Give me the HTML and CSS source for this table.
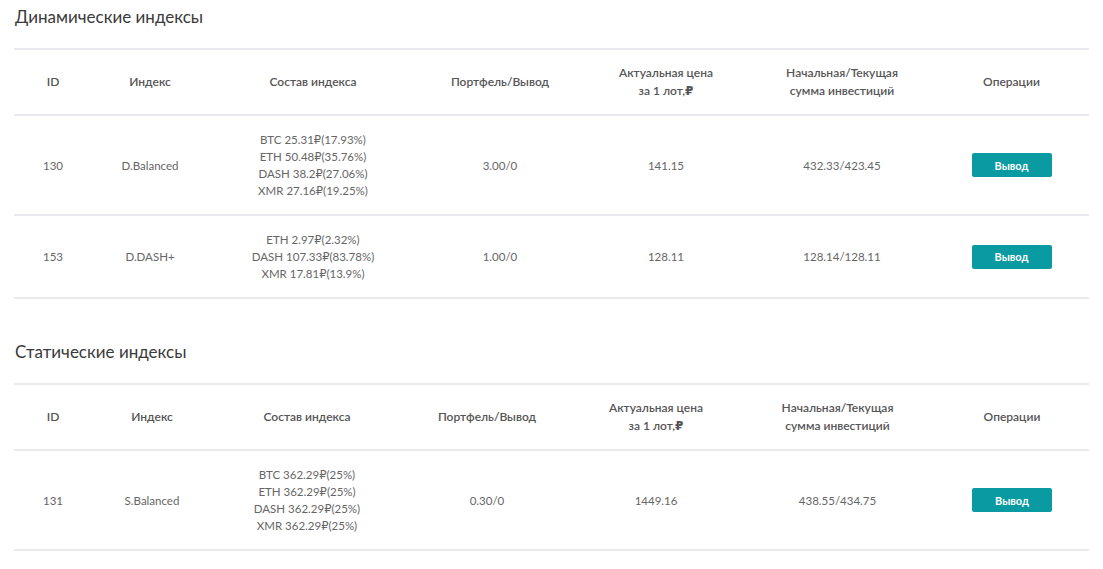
FILE: index.html
```html
<!DOCTYPE html>
<html lang="ru">
<head>
<meta charset="utf-8">
<link rel="stylesheet" href="styles.css">
</head>
<body>
<div class="page">
  <section class="section">
    <h2 class="title">Динамические индексы</h2>
    <table class="grid t-dyn">
      <colgroup>
        <col class="c1"><col class="c2"><col class="c3"><col class="c4"><col class="c5"><col class="c6"><col class="c7">
      </colgroup>
      <thead>
        <tr>
          <th>ID</th><th>Индекс</th><th>Состав индекса</th><th>Портфель/Вывод</th>
          <th>Актуальная цена<br>за 1 лот,₽</th><th>Начальная/Текущая<br>сумма инвестиций</th><th>Операции</th>
        </tr>
      </thead>
      <tbody>
        <tr>
          <td>130</td><td>D.Balanced</td>
          <td>BTC 25.31₽(17.93%)<br>ETH 50.48₽(35.76%)<br>DASH 38.2₽(27.06%)<br>XMR 27.16₽(19.25%)</td>
          <td>3.00/0</td><td>141.15</td><td>432.33/423.45</td>
          <td><button class="btn">Вывод</button></td>
        </tr>
        <tr>
          <td>153</td><td>D.DASH+</td>
          <td>ETH 2.97₽(2.32%)<br>DASH 107.33₽(83.78%)<br>XMR 17.81₽(13.9%)</td>
          <td>1.00/0</td><td>128.11</td><td>128.14/128.11</td>
          <td><button class="btn">Вывод</button></td>
        </tr>
      </tbody>
    </table>
  </section>
  <section class="section section-next">
    <h2 class="title">Статические индексы</h2>
    <table class="grid t-stat">
      <colgroup>
        <col class="c1"><col class="c2"><col class="c3"><col class="c4"><col class="c5"><col class="c6"><col class="c7">
      </colgroup>
      <thead>
        <tr>
          <th>ID</th><th>Индекс</th><th>Состав индекса</th><th>Портфель/Вывод</th>
          <th>Актуальная цена<br>за 1 лот,₽</th><th>Начальная/Текущая<br>сумма инвестиций</th><th>Операции</th>
        </tr>
      </thead>
      <tbody>
        <tr>
          <td>131</td><td>S.Balanced</td>
          <td>BTC 362.29₽(25%)<br>ETH 362.29₽(25%)<br>DASH 362.29₽(25%)<br>XMR 362.29₽(25%)</td>
          <td>0.30/0</td><td>1449.16</td><td>438.55/434.75</td>
          <td><button class="btn">Вывод</button></td>
        </tr>
      </tbody>
    </table>
  </section>
</div>
</body>
</html>
```
FILE: styles.css
```css
html, body {
  margin: 0;
  padding: 0;
  background: #fff;
}
body {
  font-family: Lato, "Open Sans", "DejaVu Sans", sans-serif;
  color: #666;
}
.page {
  padding: 0 14px;
  width: 1075px;
}
.title {
  margin: 6px 0 20px 1px;
  font-size: 17px;
  line-height: 22px;
  font-weight: 400;
  color: #3a3a3a;
}
.section-next {
  margin-top: 42px;
}
.grid {
  width: 1075px;
  table-layout: fixed;
  border-collapse: collapse;
}
.grid th, .grid td {
  text-align: center;
  vertical-align: middle;
  border-top: 2px solid #e9e9ef;
  border-bottom: 2px solid #e9e9ef;
  padding: 0;
}
.grid th {
  height: 64px;
  font-size: 12px;
  line-height: 18px;
  font-weight: 600;
  color: #555;
}
.grid td {
  padding: 15px 0;
  font-size: 11.5px;
  line-height: 17px;
  color: #666;
}
.t-dyn .c1 { width: 78px; }
.t-dyn .c2 { width: 116px; }
.t-dyn .c3 { width: 210px; }
.t-dyn .c4 { width: 164px; }
.t-dyn .c5 { width: 168px; }
.t-dyn .c6 { width: 184px; }
.t-dyn .c7 { width: 155px; }
.t-stat .c1 { width: 78px; }
.t-stat .c2 { width: 120px; }
.t-stat .c3 { width: 190px; }
.t-stat .c4 { width: 170px; }
.t-stat .c5 { width: 168px; }
.t-stat .c6 { width: 195px; }
.t-stat .c7 { width: 154px; }
.btn {
  display: inline-block;
  width: 80px;
  height: 24px;
  border: 0;
  border-radius: 2px;
  background: #0a9aa2;
  color: #fff;
  font-family: Lato, "Open Sans", sans-serif;
  font-size: 11px;
  font-weight: 700;
  padding: 0;
  cursor: pointer;
}
```
